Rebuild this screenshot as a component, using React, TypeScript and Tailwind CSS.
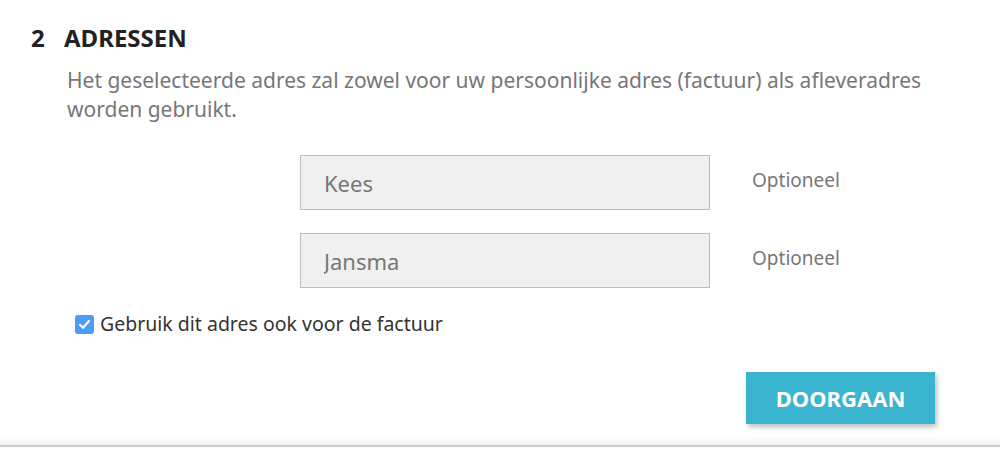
import React from 'react'
import { useState } from 'react'

export default function App() {
  const [voornaam, setVoornaam] = useState("")
  const [achternaam, setAchternaam] = useState("")
  const [factuur, setFactuur] = useState(true)

  return (
    <div className="w-[1000px] h-[454px] bg-white flex flex-col" style={{ fontFamily: '"Noto Sans", "Open Sans", sans-serif' }}>
      <div className="flex-1 flex flex-col pl-[31px] pt-[22px]">
        <h2 className="flex text-[24px] leading-[32px] font-bold text-[#222]">
          <span className="w-[33px]">2</span>
          <span>ADRESSEN</span>
        </h2>
        <p className="ml-[36px] mt-[12px] w-[870px] text-[21px] leading-[29px] text-[#777]">
          Het geselecteerde adres zal zowel voor uw persoonlijke adres (factuur) als afleveradres worden gebruikt.
        </p>

        <div className="mt-[31px] ml-[269px] flex flex-col gap-[23px]">
          <div className="flex items-center">
            <input
              value={voornaam}
              onChange={(e) => setVoornaam(e.target.value)}
              placeholder="Kees"
              className="w-[410px] h-[55px] px-[23px] bg-[#f0f0f0] border border-[#bdbdbd] text-[22px] text-[#555] placeholder:text-[#777] outline-none"
            />
            <span className="ml-[42px] -mt-[4px] text-[19px] text-[#777]">Optioneel</span>
          </div>
          <div className="flex items-center">
            <input
              value={achternaam}
              onChange={(e) => setAchternaam(e.target.value)}
              placeholder="Jansma"
              className="w-[410px] h-[55px] px-[23px] bg-[#f0f0f0] border border-[#bdbdbd] text-[22px] text-[#555] placeholder:text-[#777] outline-none"
            />
            <span className="ml-[42px] -mt-[4px] text-[19px] text-[#777]">Optioneel</span>
          </div>
        </div>

        <label className="mt-[22px] ml-[44px] flex items-center gap-[6px] text-[19.5px] leading-[28px] text-[#333] cursor-pointer">
          <span
            onClick={() => setFactuur(!factuur)}
            className={`w-[19px] h-[19px] rounded-[3px] flex items-center justify-center ${factuur ? "bg-[#4a9df8]" : "bg-white border border-[#999]"}`}
          >
            {factuur && (
              <svg width="15" height="15" viewBox="0 0 15 15" fill="none">
                <path d="M3 7.8 L6 10.8 L12 4" stroke="white" strokeWidth="2.2" strokeLinecap="round" strokeLinejoin="round" />
              </svg>
            )}
          </span>
          Gebruik dit adres ook voor de factuur
        </label>

        <div className="mt-[34px] pr-[65px] flex justify-end">
          <button className="w-[189px] h-[52px] bg-[#3bb4d0] text-white text-[22px] font-bold shadow-[2px_3px_5px_rgba(0,0,0,0.25)]">
            DOORGAAN
          </button>
        </div>
      </div>
      <div className="h-[8px] bg-gradient-to-b from-white to-[#f2f2f2]" />
      <div className="h-[2px] bg-[#cfcfcf]" />
      <div className="h-[7px]" />
    </div>
  )
}
